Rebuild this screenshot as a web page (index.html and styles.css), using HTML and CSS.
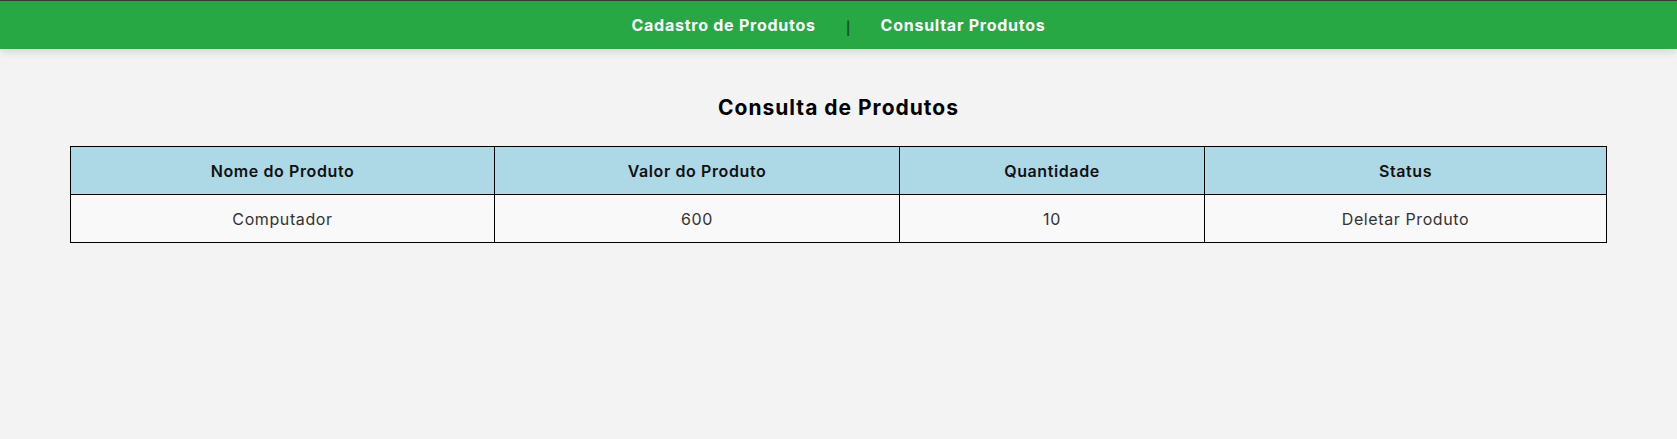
FILE: index.html
```html
<!DOCTYPE html>
<html lang="pt-BR">
<head>
<meta charset="utf-8">
<title>Consulta de Produtos</title>
<link rel="stylesheet" href="styles.css">
</head>
<body>
<header class="topbar">
  <nav class="nav">
    <a class="nav-link" href="#">Cadastro de Produtos</a>
    <span class="nav-sep">|</span>
    <a class="nav-link" href="#">Consultar Produtos</a>
  </nav>
</header>
<main class="content">
  <h2 class="page-title">Consulta de Produtos</h2>
  <table class="products">
    <thead>
      <tr>
        <th class="col-name">Nome do Produto</th>
        <th class="col-value">Valor do Produto</th>
        <th class="col-qty">Quantidade</th>
        <th class="col-status">Status</th>
      </tr>
    </thead>
    <tbody>
      <tr>
        <td>Computador</td>
        <td>600</td>
        <td>10</td>
        <td>Deletar Produto</td>
      </tr>
    </tbody>
  </table>
</main>
</body>
</html>
```
FILE: styles.css
```css
html, body {
  margin: 0;
  padding: 0;
}

body {
  background: #f3f3f3;
  font-family: Inter, "Open Sans", "DejaVu Sans", sans-serif;
  color: #111;
}

.topbar {
  background: #28a745;
  border-top: 1px solid #3a3a3a;
  height: 48px;
  box-shadow: 0 3px 8px rgba(0, 0, 0, 0.12);
  display: flex;
  align-items: center;
  justify-content: center;
}

.nav {
  display: flex;
  align-items: center;
  gap: 30px;
}

.nav-link {
  color: #fff;
  text-decoration: none;
  font-weight: 700;
  font-size: 16px;
  letter-spacing: 0.75px;
}

.nav-sep {
  color: #175a27;
  font-size: 13px;
  font-weight: 700;
  margin-top: 6px;
}

.content {
  padding-top: 47px;
}

.page-title {
  margin: 0 0 26px;
  text-align: center;
  font-size: 21px;
  line-height: 24px;
  font-weight: 700;
  letter-spacing: 1px;
  color: #000;
}

.products {
  width: 1536px;
  margin: 0 auto;
  border-collapse: collapse;
  table-layout: fixed;
}

.products th,
.products td {
  border: 1px solid #000;
  text-align: center;
  height: 48px;
  padding: 0 8px;
  font-size: 16px;
  letter-spacing: 0.6px;
  box-sizing: border-box;
}

.products th {
  background: #add8e6;
  font-weight: 600;
  color: #111;
}

.products td {
  background: #f9f9f9;
  font-weight: 400;
  color: #333;
}

.col-name { width: 424px; }
.col-value { width: 405px; }
.col-qty { width: 305px; }
.col-status { width: 402px; }
```
